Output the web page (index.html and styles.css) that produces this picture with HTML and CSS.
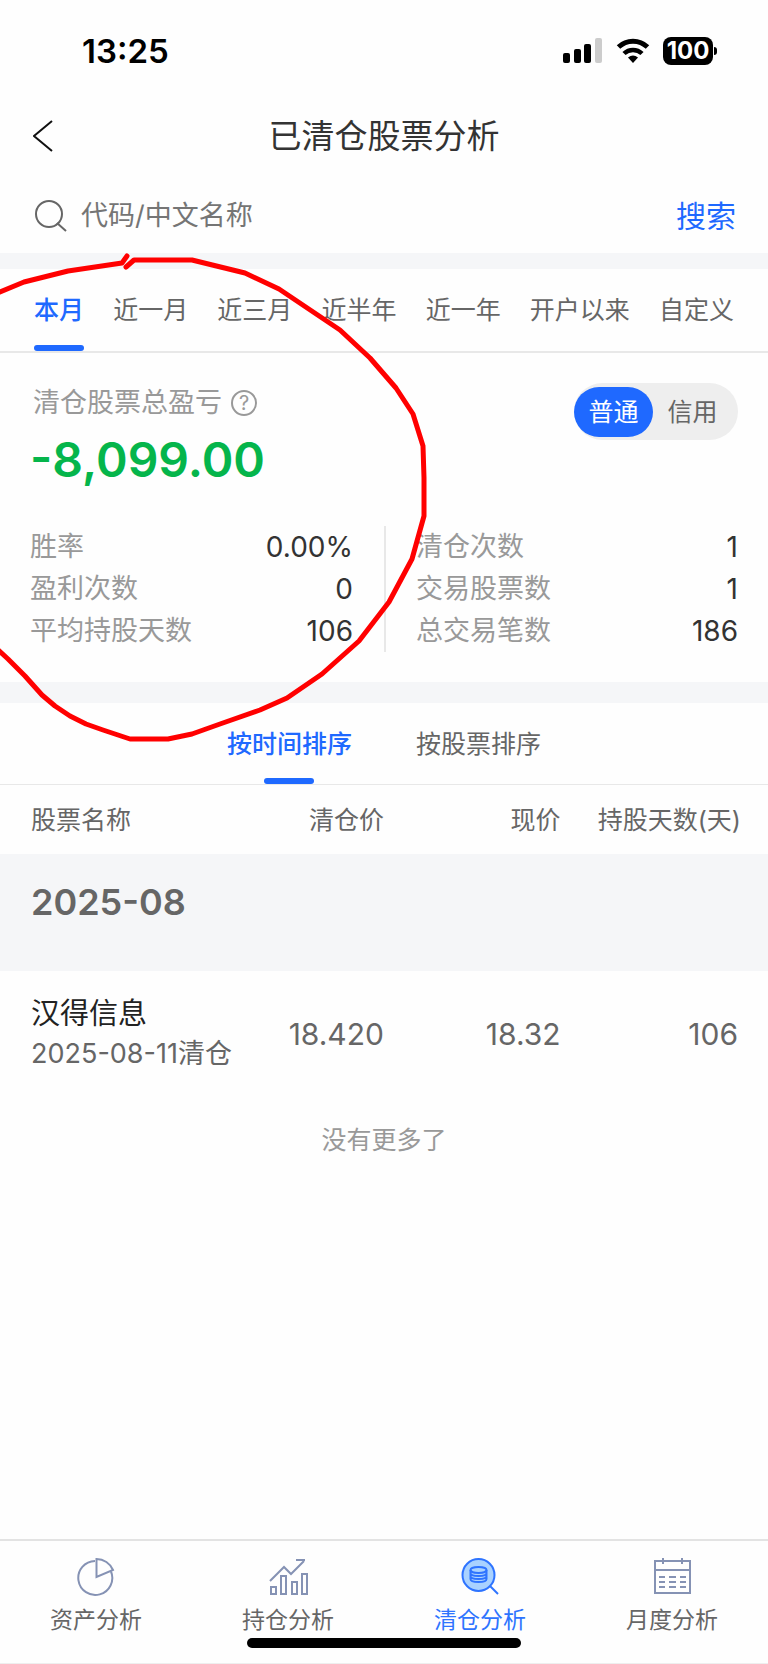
FILE: index.html
```html
<!DOCTYPE html>
<html lang="zh-CN">
<head>
    <meta charset="UTF-8">
    <meta name="viewport" content="width=device-width, initial-scale=1.0">
    <title>已清仓股票分析</title>
    <link rel="stylesheet" href="styles.css">
</head>
<body>
    <div class="status-bar">
        <span class="status-time">13:25</span>
        <div class="status-icons">
            <svg width="40" height="26" viewBox="0 0 40 26">
                <rect x="0" y="15" width="7" height="10" rx="2"/>
                <rect x="11" y="11" width="7" height="14" rx="2"/>
                <rect x="21" y="6" width="7" height="19" rx="2"/>
                <rect x="32" y="0" width="7" height="25" rx="2" fill="#ccc"/>
            </svg>
            <svg width="34" height="26" viewBox="0 0 34 26">
                <path d="M2.500 9a21 21 0 0 1 29 0" fill="none" stroke="#000" stroke-width="5"/>
                <path d="M8 15.500a13 13 0 0 1 18 0" fill="none" stroke="#000" stroke-width="4.500"/>
                <path d="M17 25l-5-5.500q5-4 10 0z"/>
            </svg>
            <span class="battery">100</span>
        </div>
    </div>

    <header class="header">
        <button class="btn-back" aria-label="返回">
            <svg width="20" height="32" viewBox="0 0 20 32" fill="none" stroke="#111" stroke-width="2">
                <path d="M19 1L1 16l18 15"/>
            </svg>
        </button>
        <h1 class="header-title">已清仓股票分析</h1>
    </header>

    <form class="search">
        <svg width="32" height="32" viewBox="0 0 32 32" fill="none" stroke="#666" stroke-width="2">
            <circle cx="14" cy="14" r="13"/>
            <path d="M22 23l9 8"/>
        </svg>
        <input class="search-input" type="text" aria-label="代码/中文名称" placeholder="代码/中文名称">
        <button class="search-btn" type="button">搜索</button>
    </form>

    <!-- Period tabs -->
    <nav class="tabs period-tabs">
        <button class="tab active">本月</button>
        <button class="tab">近一月</button>
        <button class="tab">近三月</button>
        <button class="tab">近半年</button>
        <button class="tab">近一年</button>
        <button class="tab">开户以来</button>
        <button class="tab">自定义</button>
    </nav>

    <section class="summary">
        <div class="summary-top">
            <div>
                <div class="summary-label">
                    清仓股票总盈亏
                    <button class="btn-help" aria-label="说明">?</button>
                </div>
                <div class="summary-value">-8,099.00</div>
            </div>
            <div class="switch">
                <button class="switch-item active">普通</button>
                <button class="switch-item">信用</button>
            </div>
        </div>
        <div class="stats">
            <dl class="stats-col">
                <div class="stat"><dt>胜率</dt><dd>0.00%</dd></div>
                <div class="stat"><dt>盈利次数</dt><dd>0</dd></div>
                <div class="stat"><dt>平均持股天数</dt><dd>106</dd></div>
            </dl>
            <dl class="stats-col">
                <div class="stat"><dt>清仓次数</dt><dd>1</dd></div>
                <div class="stat"><dt>交易股票数</dt><dd>1</dd></div>
                <div class="stat"><dt>总交易笔数</dt><dd>186</dd></div>
            </dl>
        </div>
    </section>

    <!-- Sort tabs -->
    <nav class="tabs sort-tabs">
        <button class="tab active">按时间排序</button>
        <button class="tab">按股票排序</button>
    </nav>

    <table>
        <thead>
            <tr>
                <th class="col-name">股票名称</th>
                <th class="col-sold">清仓价</th>
                <th class="col-price">现价</th>
                <th class="col-days">持股天数(天)</th>
            </tr>
        </thead>
        <tbody>
            <tr class="month-row">
                <td colspan="4">2025-08</td>
            </tr>
            <tr class="stock-row">
                <td>
                    <div class="stock-name">汉得信息</div>
                    <div class="stock-date">2025-08-11清仓</div>
                </td>
                <td>18.420</td>
                <td>18.32</td>
                <td>106</td>
            </tr>
        </tbody>
    </table>
    <p class="no-more">没有更多了</p>

    <footer class="footer">
        <nav class="bottom-nav">
            <a class="nav-item" href="#">
                <svg class="nav-icon" viewBox="0 0 40 40">
                    <path d="M19 4A17 17 0 1 0 35 14.500"/>
                    <path d="M20.500 2v18L37 13A18 18 0 0 0 20.500 2z"/>
                </svg>
                资产分析
            </a>
            <a class="nav-item" href="#">
                <svg class="nav-icon" viewBox="0 0 40 40">
                    <path d="M2 24L16 10l7 7L36 4M28 3h9"/>
                    <path d="M3 30h5v7H3zM13 19h5v18h-5zM24 25h5v12h-5zM34 17h5v20h-5z"/>
                </svg>
                持仓分析
            </a>
            <a class="nav-item active" href="#">
                <svg class="nav-icon" viewBox="0 0 40 40">
                    <circle cx="18.500" cy="18" r="16" fill="#a9d2ff"/>
                    <path d="M30 29l8 8"/>
                    <ellipse cx="18.500" cy="13" rx="8" ry="3"/>
                    <path d="M10.500 13v9c0 4 16 4 16 0v-9M10.500 16c0 4 16 4 16 0M10.500 19c0 4 16 4 16 0"/>
                </svg>
                清仓分析
            </a>
            <a class="nav-item" href="#">
                <svg class="nav-icon" viewBox="0 0 40 40">
                    <path d="M3 4h35v32H3zM3 13h35M11 1v6M30 1v6"/>
                    <path d="M7 20h6M17 20h7M28 20h6M7 25h6M17 25h7M28 25h6M7 30h6M17 30h7M28 30h6"/>
                </svg>
                月度分析
            </a>
        </nav>
        <div class="home-bar"></div>
    </footer>

    <!-- Hand-drawn circle over the summary -->
    <svg class="marker" width="430" height="500" viewBox="0 250 430 500">
        <path d="M-4 293L0 292 24 282 68 271 122 263 127 256"/>
        <path d="M126 267L134 260H192L245 273 279 289 340 330 370 358 396 388 413 414 423 446 424 478V516L412 559 389 602 359 641 322 674 287 698 260 710 220 724 192 734 168 739H130L103 730 86 724 70 716 55 706 42 695 25 676 8 659-4 648"/>
    </svg>
</body>
</html>
```

FILE: styles.css
```css
* {
    margin: 0;
    padding: 0;
    box-sizing: border-box;
}

body {
    position: relative;
    display: flex;
    flex-direction: column;
    min-height: 100vh;
    background: #fefefe;
    color: #666;
    font-family: Inter, "Noto Sans CJK SC", sans-serif;
    font-size: 25px;
    line-height: 32px;
}

button, input {
    border: none;
    background: none;
    color: inherit;
    font: inherit;
}

button {
    cursor: pointer;
}

/* Status bar */
.status-bar {
    display: flex;
    justify-content: space-between;
    align-items: center;
    height: 102px;
    padding: 0 55px 0 82px;
}

.status-time {
    color: #000;
    font-size: 33px;
    font-weight: 600;
}

.status-icons {
    display: flex;
    align-items: center;
    gap: 13px;
}

.battery {
    position: relative;
    width: 50px;
    border-radius: 8px;
    background: #000;
    color: #fff;
    font-size: 24px;
    font-weight: 700;
    line-height: 28px;
    text-align: center;
}

.battery::after {
    content: "";
    position: absolute;
    top: 10px;
    right: -4px;
    width: 3px;
    height: 8px;
    border-radius: 0 4px 4px 0;
    background: #000;
}

/* Header */
.header {
    display: grid;
    grid-template-columns: 1fr auto 1fr;
    align-items: center;
    height: 68px;
    padding: 0 33px;
}

.btn-back {
    display: flex;
    justify-self: start;
}

.header-title {
    color: #333;
    font-size: 33px;
    font-weight: 400;
}

/* Search */
.search {
    display: flex;
    align-items: center;
    height: 83px;
    padding: 8px 32px 0 35px;
}

.search-input {
    flex: 1;
    min-width: 0;
    height: 40px;
    padding: 0 14px;
    font-size: 27px;
    outline: none;
}

.search-input::placeholder {
    color: #757575;
}

.search-btn {
    color: #1f69ff;
    font-size: 30px;
}

/* Tabs */
.tabs {
    display: flex;
    box-sizing: content-box;
    border-bottom: 2px solid #e8e8e8;
}

.period-tabs {
    justify-content: space-between;
    height: 82px;
    padding: 0 34px;
    border-top: 16px solid #f5f6f8;
}

.sort-tabs {
    justify-content: center;
    gap: 64px;
    height: 81px;
    border-top: 21px solid #f5f6f8;
    border-bottom-width: 1px;
}

.tab {
    position: relative;
    white-space: nowrap;
}

.tab.active {
    color: #1f69ff;
    font-weight: 500;
}

.tab.active::after {
    content: "";
    position: absolute;
    bottom: 0;
    left: 50%;
    width: 50px;
    height: 6px;
    margin-left: -25px;
    border-radius: 3px;
    background: #1f69ff;
}

/* Summary */
.summary {
    padding: 30px;
}

.summary-top {
    display: flex;
    justify-content: space-between;
    align-items: flex-start;
}

.summary-label {
    display: flex;
    align-items: center;
    gap: 9px;
    padding-left: 3px;
    color: #999;
    font-size: 27px;
    line-height: 40px;
}

.btn-help {
    width: 26px;
    height: 26px;
    border: 2px solid #999;
    border-radius: 50%;
    font-size: 20px;
    line-height: 22px;
}

.summary-value {
    margin-top: 8px;
    color: #05b54b;
    font-size: 48px;
    font-weight: 600;
    line-height: 58px;
}

.switch {
    display: flex;
    align-items: center;
    height: 57px;
    padding-right: 6px;
    border-radius: 29px;
    background: #eee;
}

.switch-item {
    width: 79px;
    height: 50px;
    border-radius: 25px;
}

.switch-item.active {
    background: #1f69ff;
    color: #fff;
}

.stats {
    display: grid;
    grid-template-columns: 1fr 1fr;
    margin-top: 37px;
}

.stats-col {
    padding-right: 31px;
}

.stats-col + .stats-col {
    padding: 0 0 0 30px;
    border-left: 2px solid #e8e8e8;
}

.stat {
    display: flex;
    justify-content: space-between;
    line-height: 42px;
}

.stat dt {
    color: #999;
    font-size: 27px;
}

.stat dd {
    color: #333;
    font-size: 28px;
}

/* Table */
table {
    width: 100%;
    border-collapse: collapse;
    table-layout: fixed;
}

th {
    height: 69px;
    font-weight: 400;
    text-align: right;
    white-space: nowrap;
}

.col-name {
    width: 31%;
    padding-left: 31px;
    text-align: left;
}

.col-sold {
    width: 19%;
}

.col-price {
    width: 23%;
}

.col-days {
    width: 27%;
    padding-right: 27px;
}

.month-row td {
    height: 117px;
    padding: 26px 31px;
    background: #f5f6f8;
    font-size: 36px;
    font-weight: 600;
    line-height: 44px;
    vertical-align: top;
}

.stock-row td {
    padding: 23px 0;
    font-size: 30px;
    line-height: 40px;
    text-align: right;
}

.stock-row td:first-child {
    padding-left: 31px;
    text-align: left;
    white-space: nowrap;
}

.stock-row td:last-child {
    padding-right: 30px;
}

.stock-name {
    color: #222;
    font-size: 29px;
}

.stock-date {
    font-size: 27px;
}

.no-more {
    padding: 23px 0;
    color: #999;
    line-height: 40px;
    text-align: center;
}

/* Bottom navigation */
.footer {
    margin-top: auto;
    padding: 16px 0 15px;
    border-top: 2px solid #e3e3e3;
    border-bottom: 1px solid #eee;
}

.bottom-nav {
    display: grid;
    grid-template-columns: repeat(4, 1fr);
}

.nav-item {
    display: flex;
    flex-direction: column;
    align-items: center;
    gap: 7px;
    color: #666;
    font-size: 23px;
    text-decoration: none;
}

.nav-icon {
    width: 40px;
    height: 40px;
    fill: none;
    stroke: #8592b4;
    stroke-width: 2;
}

.nav-item.active {
    color: #2e74ff;
}

.nav-item.active .nav-icon {
    stroke: #2e74ff;
}

.home-bar {
    width: 274px;
    height: 10px;
    margin: 2px auto 0;
    border-radius: 5px;
    background: #000;
}

.marker {
    position: absolute;
    top: 250px;
    left: 0;
    fill: none;
    stroke: #f00;
    stroke-width: 5;
    stroke-linecap: round;
    stroke-linejoin: round;
    pointer-events: none;
}
```
